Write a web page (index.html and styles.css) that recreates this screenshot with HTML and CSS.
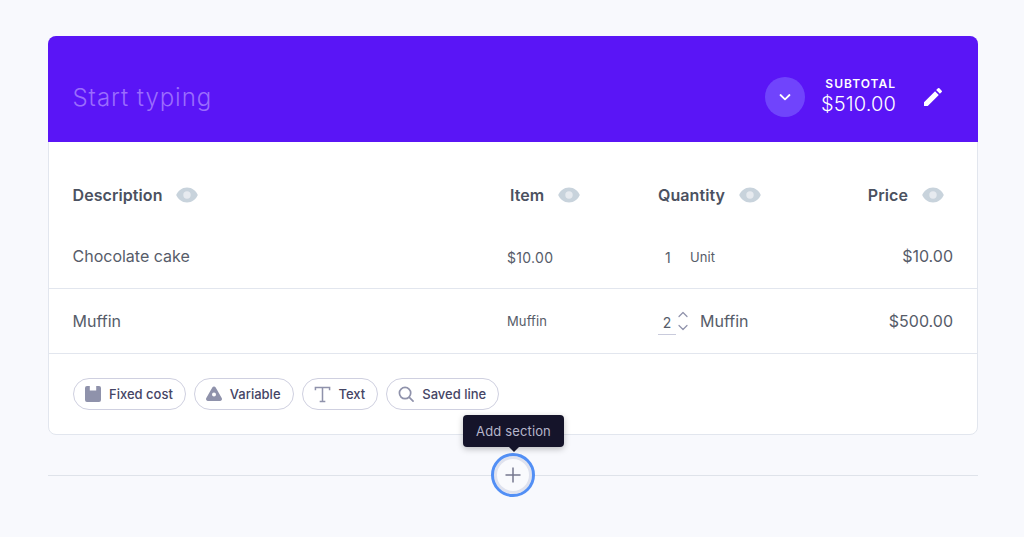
FILE: index.html
```html
<!DOCTYPE html>
<html lang="en">
<head>
<meta charset="utf-8">
<title>Section</title>
<link rel="stylesheet" href="styles.css">
</head>
<body>
<svg class="defs" width="0" height="0" aria-hidden="true">
  <symbol id="eye" viewBox="0 0 22 16"><path fill="#c8d3dc" d="M11 .5C16 .5 20 3.800 21.800 8 20 12.200 16 15.500 11 15.500S2 12.200 .2 8C2 3.800 6 .5 11 .5Z"/><circle cx="11" cy="8" r="3.700" fill="#e6eaef"/></symbol>
</svg>
<main class="page">
  <section class="card">
    <header class="banner">
      <div class="title">Start typing</div>
      <button class="round-toggle" aria-label="Expand">
        <svg width="14" height="14" viewBox="0 0 14 14"><path d="M2.500 5l4.500 4.300L11.500 5" fill="none" stroke="#fff" stroke-width="1.800" stroke-linecap="round" stroke-linejoin="round"/></svg>
      </button>
      <div class="subtotal">
        <div class="subtotal-label">SUBTOTAL</div>
        <div class="subtotal-value">$510.00</div>
      </div>
      <svg class="pencil" width="24" height="24" viewBox="0 0 24 24"><path fill="#fff" d="M3 17.250V21h3.750L17.810 9.940l-3.750-3.750L3 17.250zM20.710 7.040a1 1 0 0 0 0-1.410l-2.340-2.340a1 1 0 0 0-1.410 0l-1.830 1.830 3.750 3.750 1.830-1.830z"/></svg>
    </header>
    <div class="table">
      <div class="row head">
        <div class="col-desc"><b>Description</b><svg class="eye"><use href="#eye"/></svg></div>
        <div class="col-item head-item"><b>Item</b><svg class="eye"><use href="#eye"/></svg></div>
        <div class="col-qty"><b>Quantity</b><svg class="eye"><use href="#eye"/></svg></div>
        <div class="col-price head-price"><b>Price</b><svg class="eye"><use href="#eye"/></svg></div>
      </div>
      <div class="row body-row first">
        <div class="col-desc">Chocolate cake</div>
        <div class="col-item small wide drop">$10.00</div>
        <div class="col-qty small drop"><span class="qty-one">1</span><span class="unit">Unit</span></div>
        <div class="col-price">$10.00</div>
      </div>
      <div class="row body-row second">
        <div class="col-desc">Muffin</div>
        <div class="col-item small unit">Muffin</div>
        <div class="col-qty">
          <span class="qty-input">2</span>
          <span class="stepper">
            <svg width="10" height="7" viewBox="0 0 10 7"><path d="M1 5.500L5 1.500l4 4" fill="none" stroke="#8f92ab" stroke-width="1.200" stroke-linecap="round" stroke-linejoin="round"/></svg>
            <svg width="10" height="7" viewBox="0 0 10 7"><path d="M1 1.500l4 4 4-4" fill="none" stroke="#8f92ab" stroke-width="1.200" stroke-linecap="round" stroke-linejoin="round"/></svg>
          </span>
          <span class="qty-unit">Muffin</span>
        </div>
        <div class="col-price">$500.00</div>
      </div>
    </div>
    <div class="chips">
      <button class="chip">
        <svg width="16" height="16" viewBox="0 0 16 16"><path fill="#8f92ab" d="M2 0h2.800v4.500h6.400V0H14a2 2 0 0 1 2 2v12a2 2 0 0 1-2 2H2a2 2 0 0 1-2-2V2a2 2 0 0 1 2-2Z"/></svg>
        Fixed cost
      </button>
      <button class="chip">
        <svg width="16" height="16" viewBox="0 0 16 16"><path fill="#8f92ab" fill-rule="evenodd" d="M6.300 1.500a2 2 0 0 1 3.400 0l6 10.500a2 2 0 0 1-1.700 3H2a2 2 0 0 1-1.700-3ZM8 6.500a2 2 0 1 0 0 4 2 2 0 0 0 0-4Z"/></svg>
        Variable
      </button>
      <button class="chip">
        <svg width="17" height="17" viewBox="0 0 18 18"><path d="M1.500 4.500V1.500h15v3M9 1.500v15M6 16.500h6" fill="none" stroke="#8f92ab" stroke-width="1.600"/></svg>
        Text
      </button>
      <button class="chip">
        <svg width="16" height="16" viewBox="0 0 17 17"><circle cx="7.500" cy="7.500" r="6" fill="none" stroke="#8f92ab" stroke-width="1.800"/><path d="M12 12l4 4" stroke="#8f92ab" stroke-width="1.800" stroke-linecap="round"/></svg>
        Saved line
      </button>
    </div>
  </section>
  <div class="divider">
    <button class="add" aria-label="Add section">
      <svg width="16" height="16" viewBox="0 0 16 16"><path d="M8 .5v15M.5 8h15" stroke="#75788f" stroke-width="1.500"/></svg>
    </button>
    <div class="tooltip">Add section</div>
  </div>
</main>
</body>
</html>
```
FILE: styles.css
```css
* { box-sizing: border-box; }
html, body { margin: 0; height: 100%; }
body {
  background: #f8f9fd;
  font-family: Inter, "Liberation Sans", sans-serif;
  color: #565c69;
  overflow: hidden;
}
button { font: inherit; padding: 0; cursor: pointer; }
.defs { position: absolute; }
.page { padding: 36px 46px 0 48px; }
.card {
  background: #fff;
  border: 1px solid #e2e6ee;
  border-radius: 8px;
  height: 399px;
}
.banner {
  margin: -1px -1px 0;
  height: 106px;
  background: #5a15f6;
  border-radius: 8px 8px 0 0;
  display: flex;
  align-items: center;
  padding: 0 33px 0 24.500px;
  color: #fff;
}
.title {
  flex: 1;
  font-size: 24px;
  font-weight: 300;
  letter-spacing: .95px;
  color: #9a6cfd;
  padding-top: 17px;
  line-height: 30px;
}
.round-toggle {
  width: 40px;
  height: 40px;
  border-radius: 50%;
  border: 0;
  background: #7044fc;
  display: flex;
  align-items: center;
  justify-content: center;
  margin: 15px 16px 0 0;
}
.subtotal { text-align: right; margin-top: 15px; }
.subtotal-label { font-size: 12px; font-weight: 600; letter-spacing: 1px; line-height: 14px; }
.subtotal-value { font-size: 20px; font-weight: 300; letter-spacing: .15px; line-height: 26px; }
.pencil { margin: 15px 0 0 25px; }
.table { padding: 0 24px 0 23.500px; }
.row {
  display: grid;
  grid-template-columns: 434.500px 151px 1fr 100px;
  align-items: center;
}
.head { height: 85px; padding-top: 21px; font-size: 16px; color: #4b5160; }
.head b { font-weight: 600; letter-spacing: .08px; }
.col-desc, .col-item, .col-qty, .col-price { display: flex; align-items: center; }
.col-price { justify-content: flex-end; }
.head-item { padding-left: 3px; }
.head-price { padding-right: 9px; }
.eye { width: 22px; height: 16px; margin-left: 14px; }
.col-desc .eye { margin-left: 13px; }
.body-row { height: 65px; font-size: 16px; font-weight: 400; border-bottom: 1px solid #e2e6ee; margin: 0 -24px 0 -23.500px; padding: 0 24px 0 23.500px; }
.first { height: 62px; padding-bottom: 3px; }
.small { font-size: 14px; }
.drop { padding-top: 2px; }
.wide { letter-spacing: .3px; }
.unit { font-size: 13px; letter-spacing: .1px; }
.qty-one { width: 32px; padding-left: 7px; }
.qty-input {
  width: 18px;
  height: 24px;
  margin-top: 4px;
  border-bottom: 1px solid #c9cbdc;
  text-align: center;
  font-size: 14px;
  line-height: 24px;
}
.stepper { display: flex; flex-direction: column; gap: 6px; margin-left: 2px; }
.stepper svg { display: block; }
.qty-unit { margin-left: 12px; }
.chips { display: flex; gap: 8px; padding: 24px 24px 0; }
.chip {
  height: 32px;
  display: flex;
  align-items: center;
  gap: 8px;
  padding: 0 12px 0 11px;
  background: #fff;
  border: 1px solid #cfd0e0;
  border-radius: 16px;
  font-size: 13px;
  font-weight: 500;
  color: #454565;
}
.divider {
  position: relative;
  margin-top: 40px;
  height: 1px;
  background: #dfe3ea;
  display: flex;
  justify-content: center;
}
.add {
  position: absolute;
  top: -22px;
  left: 50%;
  margin-left: -22px;
  width: 44px;
  height: 44px;
  border-radius: 50%;
  border: 3px solid #528ff5;
  background: #f9fafd;
  box-shadow: inset 0 0 0 3px #dfe2ee;
  display: flex;
  align-items: center;
  justify-content: center;
}
.tooltip {
  position: absolute;
  top: -60px;
  left: 50%;
  margin-left: -50px;
  width: 101px;
  height: 32px;
  background: #15142a;
  border-radius: 4px;
  color: #b5b6cb;
  font-size: 13px;
  letter-spacing: .15px;
  line-height: 32px;
  text-align: center;
  box-shadow: 0 2px 6px rgba(0,0,0,.25);
}
.tooltip::after {
  content: "";
  position: absolute;
  left: 50%;
  bottom: -5px;
  margin-left: -6px;
  border: 6px solid transparent;
  border-bottom: 0;
  border-top-color: #15142a;
}
```
